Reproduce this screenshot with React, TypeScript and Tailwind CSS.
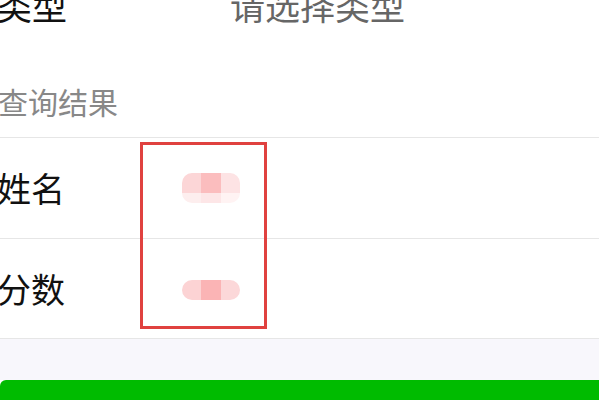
import React from "react"

const FONT = { fontFamily: '"Noto Sans CJK SC", "Noto Sans", sans-serif' }

type Blot = Readonly<{ top: string[]; bottom: string[] }>

// pixelated blur standing in for the hidden values
function Mosaic({ blot, tall }: { blot: Blot; tall: boolean }) {
  return (
    <div className="flex flex-col overflow-hidden rounded-[10px]" style={{ width: 58 }}>
      <div className="flex h-[20px]">
        {blot.top.map((c, i) => (
          <span className="flex-1" key={i} style={{ backgroundColor: c }} />
        ))}
      </div>
      {tall && (
        <div className="flex h-[10px]">
          {blot.bottom.map((c, i) => (
            <span className="flex-1" key={i} style={{ backgroundColor: c }} />
          ))}
        </div>
      )}
    </div>
  )
}

const NAME_BLOT: Blot = {
  top: ["#fcd6d7", "#fbbdbe", "#fde3e4"],
  bottom: ["#fdeeee", "#fde6e7", "#fff3f3"],
}
const SCORE_BLOT: Blot = {
  top: ["#fcd3d4", "#fbb4b5", "#fcd8d9"],
  bottom: [],
}

export default function App() {
  return (
    <div className="relative h-[400px] w-[599px] overflow-hidden bg-white text-[#111]" style={FONT}>
      <div className="-mt-[26px] flex h-[60px] items-center -ml-[3px]">
        <span className="w-[233px] text-[35px] leading-none">类型</span>
        <span className="text-[35px] leading-none text-[#666]">请选择类型</span>
      </div>

      <div className="flex h-[103px] items-end pb-[21px] -ml-[2px]">
        <span className="text-[30px] leading-none text-[#888]">查询结果</span>
      </div>

      <div className="flex h-[101px] items-center border-t border-[#e6e6e6]">
        <span className="w-[185px] -ml-[3px] text-[34px] leading-none">姓名</span>
        <Mosaic blot={NAME_BLOT} tall />
      </div>
      <div className="flex h-[101px] items-center border-y border-[#e6e6e6]">
        <span className="w-[185px] -ml-[3px] text-[34px] leading-none">分数</span>
        <div className="mt-[2px]">
          <Mosaic blot={SCORE_BLOT} tall={false} />
        </div>
      </div>

      <div className="h-[41px] bg-[#f8f7fc]" />
      <div className="-mr-[10px] h-[40px] rounded-tl-[6px] bg-[#00bb00]" />

      <div className="pointer-events-none absolute left-[140px] top-[142px] h-[187px] w-[127px] border-[3px] border-[#e0413f]" />
    </div>
  )
}
